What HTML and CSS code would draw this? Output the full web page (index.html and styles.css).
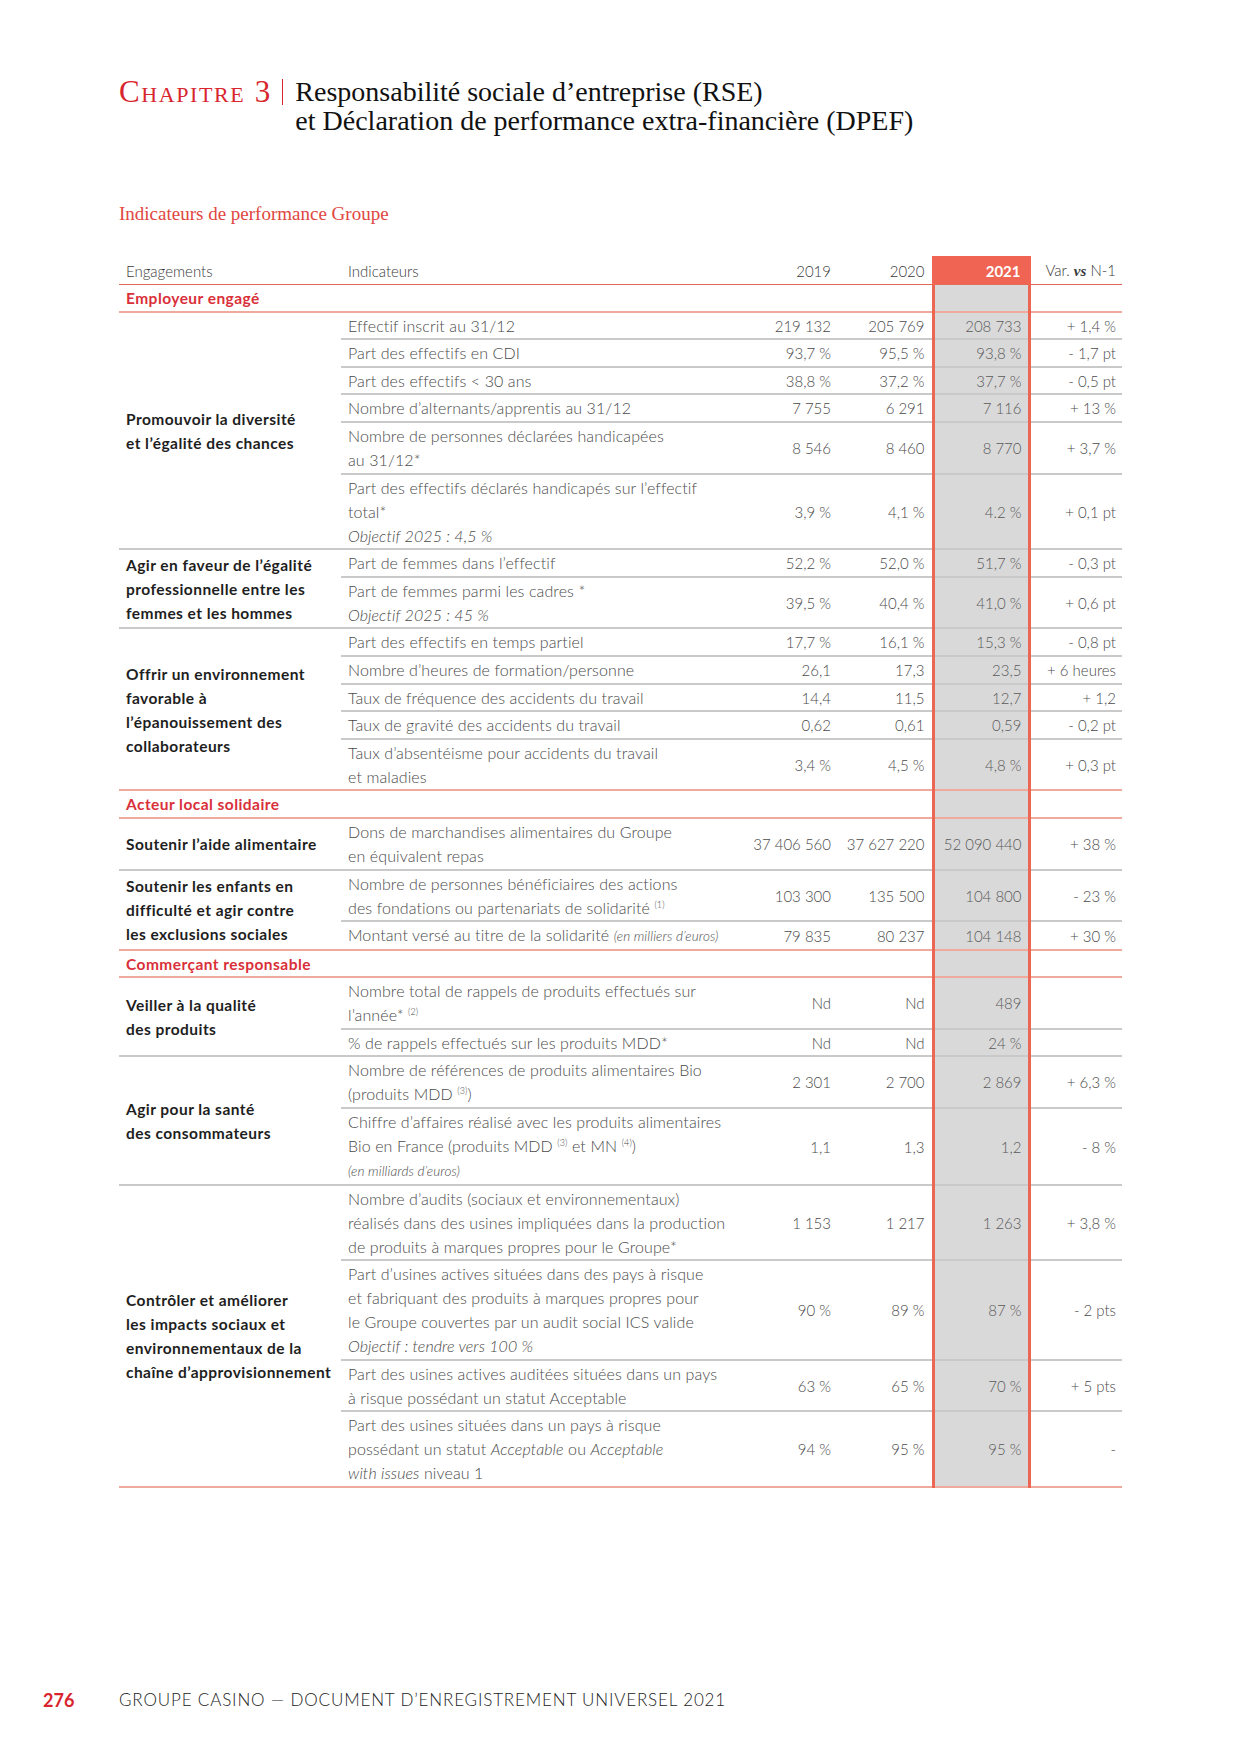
FILE: index.html
```html
<!DOCTYPE html>
<html lang="fr">
<head>
<meta charset="utf-8">
<title>Indicateurs de performance Groupe</title>
<link rel="stylesheet" href="styles.css">
</head>
<body>
<div class="page">
  <header class="chap">
    <div class="chap-label">Chapitre 3</div>
    <div class="chap-bar"></div>
    <div class="chap-title">Responsabilité sociale d’entreprise (RSE)<br>et Déclaration de performance extra-financière (DPEF)</div>
  </header>

  <h2 class="sub">Indicateurs de performance Groupe</h2>

  <table class="kpi">
    <colgroup>
      <col class="c-eng"><col class="c-ind"><col class="c-n19"><col class="c-n20"><col class="c-n21"><col class="c-var">
    </colgroup>
    <thead>
      <tr>
        <th class="eng">Engagements</th>
        <th class="ind">Indicateurs</th>
        <th class="num">2019</th>
        <th class="num">2020</th>
        <th class="num y21">2021</th>
        <th class="num var">Var. <i class="vs">vs</i> N-1</th>
      </tr>
    </thead>
    <tbody>
      <tr class="sec"><td colspan="4">Employeur engagé</td><td class="y21"></td><td></td></tr>

      <tr>
        <td class="eng" rowspan="6">Promouvoir la diversité<br>et l’égalité des chances</td>
        <td class="ind">Effectif inscrit au 31/12</td><td class="num">219 132</td><td class="num">205 769</td><td class="num y21">208 733</td><td class="num var">+ 1,4 %</td>
      </tr>
      <tr><td class="ind">Part des effectifs en CDI</td><td class="num">93,7 %</td><td class="num">95,5 %</td><td class="num y21">93,8 %</td><td class="num var">- 1,7 pt</td></tr>
      <tr><td class="ind">Part des effectifs &lt; 30 ans</td><td class="num">38,8 %</td><td class="num">37,2 %</td><td class="num y21">37,7 %</td><td class="num var">- 0,5 pt</td></tr>
      <tr><td class="ind">Nombre d’alternants/apprentis au 31/12</td><td class="num">7 755</td><td class="num">6 291</td><td class="num y21">7 116</td><td class="num var">+ 13 %</td></tr>
      <tr><td class="ind">Nombre de personnes déclarées handicapées<br>au 31/12*</td><td class="num">8 546</td><td class="num">8 460</td><td class="num y21">8 770</td><td class="num var">+ 3,7 %</td></tr>
      <tr><td class="ind">Part des effectifs déclarés handicapés sur l’effectif<br>total*<br><i>Objectif 2025 : 4,5 %</i></td><td class="num">3,9 %</td><td class="num">4,1 %</td><td class="num y21">4.2 %</td><td class="num var">+ 0,1 pt</td></tr>

      <tr>
        <td class="eng" rowspan="2">Agir en faveur de l’égalité<br>professionnelle entre les<br>femmes et les hommes</td>
        <td class="ind">Part de femmes dans l’effectif</td><td class="num">52,2 %</td><td class="num">52,0 %</td><td class="num y21">51,7 %</td><td class="num var">- 0,3 pt</td>
      </tr>
      <tr><td class="ind">Part de femmes parmi les cadres *<br><i>Objectif 2025 : 45 %</i></td><td class="num">39,5 %</td><td class="num">40,4 %</td><td class="num y21">41,0 %</td><td class="num var">+ 0,6 pt</td></tr>

      <tr>
        <td class="eng last" rowspan="5">Offrir un environnement<br>favorable à<br>l’épanouissement des<br>collaborateurs</td>
        <td class="ind">Part des effectifs en temps partiel</td><td class="num">17,7 %</td><td class="num">16,1 %</td><td class="num y21">15,3 %</td><td class="num var">- 0,8 pt</td>
      </tr>
      <tr><td class="ind">Nombre d’heures de formation/personne</td><td class="num">26,1</td><td class="num">17,3</td><td class="num y21">23,5</td><td class="num var">+ 6 heures</td></tr>
      <tr><td class="ind">Taux de fréquence des accidents du travail</td><td class="num">14,4</td><td class="num">11,5</td><td class="num y21">12,7</td><td class="num var">+ 1,2</td></tr>
      <tr><td class="ind">Taux de gravité des accidents du travail</td><td class="num">0,62</td><td class="num">0,61</td><td class="num y21">0,59</td><td class="num var">- 0,2 pt</td></tr>
      <tr class="last"><td class="ind">Taux d’absentéisme pour accidents du travail<br>et maladies</td><td class="num">3,4 %</td><td class="num">4,5 %</td><td class="num y21">4,8 %</td><td class="num var">+ 0,3 pt</td></tr>

      <tr class="sec"><td colspan="4">Acteur local solidaire</td><td class="y21"></td><td></td></tr>

      <tr>
        <td class="eng">Soutenir l’aide alimentaire</td>
        <td class="ind">Dons de marchandises alimentaires du Groupe<br>en équivalent repas</td><td class="num">37 406 560</td><td class="num">37 627 220</td><td class="num y21">52 090 440</td><td class="num var">+ 38 %</td>
      </tr>
      <tr>
        <td class="eng last" rowspan="2">Soutenir les enfants en<br>difficulté et agir contre<br>les exclusions sociales</td>
        <td class="ind">Nombre de personnes bénéficiaires des actions<br>des fondations ou partenariats de solidarité <sup>(1)</sup></td><td class="num">103 300</td><td class="num">135 500</td><td class="num y21">104 800</td><td class="num var">- 23 %</td>
      </tr>
      <tr class="last"><td class="ind">Montant versé au titre de la solidarité <small class="note">(en milliers d’euros)</small></td><td class="num">79 835</td><td class="num">80 237</td><td class="num y21">104 148</td><td class="num var">+ 30 %</td></tr>

      <tr class="sec"><td colspan="4">Commerçant responsable</td><td class="y21"></td><td></td></tr>

      <tr>
        <td class="eng" rowspan="2">Veiller à la qualité<br>des produits</td>
        <td class="ind">Nombre total de rappels de produits effectués sur<br>l’année* <sup>(2)</sup></td><td class="num">Nd</td><td class="num">Nd</td><td class="num y21">489</td><td class="num var"></td>
      </tr>
      <tr><td class="ind">% de rappels effectués sur les produits MDD*</td><td class="num">Nd</td><td class="num">Nd</td><td class="num y21">24 %</td><td class="num var"></td></tr>

      <tr>
        <td class="eng" rowspan="2">Agir pour la santé<br>des consommateurs</td>
        <td class="ind">Nombre de références de produits alimentaires Bio<br>(produits MDD <sup>(3)</sup>)</td><td class="num">2 301</td><td class="num">2 700</td><td class="num y21">2 869</td><td class="num var">+ 6,3 %</td>
      </tr>
      <tr><td class="ind">Chiffre d’affaires réalisé avec les produits alimentaires<br>Bio en France (produits MDD <sup>(3)</sup> et MN <sup>(4)</sup>)<br><small class="note">(en milliards d’euros)</small></td><td class="num">1,1</td><td class="num">1,3</td><td class="num y21">1,2</td><td class="num var">- 8 %</td></tr>

      <tr>
        <td class="eng last" rowspan="4">Contrôler et améliorer<br>les impacts sociaux et<br>environnementaux de la<br>chaîne d’approvisionnement</td>
        <td class="ind">Nombre d’audits (sociaux et environnementaux)<br>réalisés dans des usines impliquées dans la production<br>de produits à marques propres pour le Groupe*</td><td class="num">1 153</td><td class="num">1 217</td><td class="num y21">1 263</td><td class="num var">+ 3,8 %</td>
      </tr>
      <tr><td class="ind">Part d’usines actives situées dans des pays à risque<br>et fabriquant des produits à marques propres pour<br>le Groupe couvertes par un audit social ICS valide<br><i>Objectif : tendre vers 100 %</i></td><td class="num">90 %</td><td class="num">89 %</td><td class="num y21">87 %</td><td class="num var">- 2 pts</td></tr>
      <tr><td class="ind">Part des usines actives auditées situées dans un pays<br>à risque possédant un statut Acceptable</td><td class="num">63 %</td><td class="num">65 %</td><td class="num y21">70 %</td><td class="num var">+ 5 pts</td></tr>
      <tr class="last"><td class="ind">Part des usines situées dans un pays à risque<br>possédant un statut <i>Acceptable</i> ou <i>Acceptable</i><br><i>with issues</i> niveau 1</td><td class="num">94 %</td><td class="num">95 %</td><td class="num y21">95 %</td><td class="num var">-</td></tr>
    </tbody>
  </table>

  <footer class="foot">
    <span class="pno">276</span>
    <span class="ftxt">GROUPE CASINO — DOCUMENT D’ENREGISTREMENT UNIVERSEL 2021</span>
  </footer>
</div>
</body>
</html>
```

FILE: styles.css
```css
html, body {
  margin: 0;
  padding: 0;
  background: #ffffff;
}

.page {
  width: 1241px;
  height: 1754px;
  box-sizing: border-box;
  padding: 77px 119px 0 119px;
  font-family: "Lato", "Liberation Sans", sans-serif;
}

/* Chapter title */
.chap {
  display: flex;
  align-items: flex-start;
  font-family: "Liberation Serif", serif;
  font-size: 28px;
  line-height: 29px;
}
.chap-label {
  color: #d8252e;
  font-variant: small-caps;
  font-size: 31px;
  letter-spacing: 1.6px;
}
.chap-bar {
  width: 1.5px;
  height: 26px;
  background: #d8252e;
  margin: 2px 12px 0 10px;
}
.chap-title {
  color: #111111;
}

/* Section heading */
.sub {
  margin: 68px 0 0 0;
  font-family: "Liberation Serif", serif;
  font-weight: normal;
  font-size: 19px;
  line-height: 22px;
  color: #e0463f;
}

/* Table */
.kpi {
  margin-top: 31px;
  width: 1003px;
  table-layout: fixed;
  border-collapse: collapse;
  font-size: 15px;
  line-height: 24px;
  color: #4a4a4a;
  font-weight: 300;
}
.c-eng { width: 222px; }
.c-ind { width: 404px; }
.c-n19 { width: 93px; }
.c-n20 { width: 95px; }
.c-n21 { width: 96px; }
.c-var { width: 93px; }

.kpi th {
  font-weight: 300;
  text-align: left;
  padding: 2px 7px 1px 7px;
  border-bottom: 1px solid #e46a5a;
  color: #3a3a3a;
}
.kpi th.num { text-align: right; }
.kpi th.y21 {
  background: #ef6452;
  color: #ffffff;
  font-weight: 700;
  border-left: 3px solid #ef6452;
  border-right: 3px solid #ef6452;
}
.kpi th.var { padding-right: 6px; }
.vs {
  font-family: "Liberation Serif", serif;
  font-weight: bold;
  font-size: 15px;
}

.kpi td {
  padding: 1px 7px 0.6px 7px;
  border-bottom: 2px solid #c9c9c9;
  vertical-align: middle;
}
.kpi td.ind {
  font-size: 16px;
  letter-spacing: 0.1px;
  white-space: nowrap;
}
.kpi td.num {
  text-align: right;
  white-space: nowrap;
}
.kpi td.var { padding-right: 6px; }
.kpi td.y21 {
  background: #d9d9d9;
  border-left: 3px solid #ec6654;
  border-right: 3px solid #ec6654;
  color: #5a5a5a;
  padding-right: 6px;
}
.kpi td.eng {
  color: #1e1e1e;
  font-weight: 700;
  font-size: 15.5px;
  letter-spacing: 0.45px;
  white-space: nowrap;
}

.kpi tr.sec td {
  color: #d9303a;
  font-weight: 700;
  font-size: 15.5px;
  letter-spacing: 0.45px;
  border-bottom: 2px solid #efaa9c;
}
.kpi tr.last td,
.kpi td.eng.last {
  border-bottom: 2px solid #efaa9c;
}

.kpi sup {
  font-size: 9px;
  line-height: 0;
  vertical-align: 6px;
}
.note {
  font-style: italic;
  font-size: 13.5px;
}

/* Footer */
.foot {
  display: flex;
  align-items: center;
  margin: 202px 0 0 -76px;
  line-height: 20px;
}
.pno {
  width: 76px;
  color: #d8252e;
  font-weight: 700;
  font-size: 18px;
}
.ftxt {
  font-weight: 300;
  font-size: 17px;
  color: #222222;
  letter-spacing: 0.85px;
}
```
